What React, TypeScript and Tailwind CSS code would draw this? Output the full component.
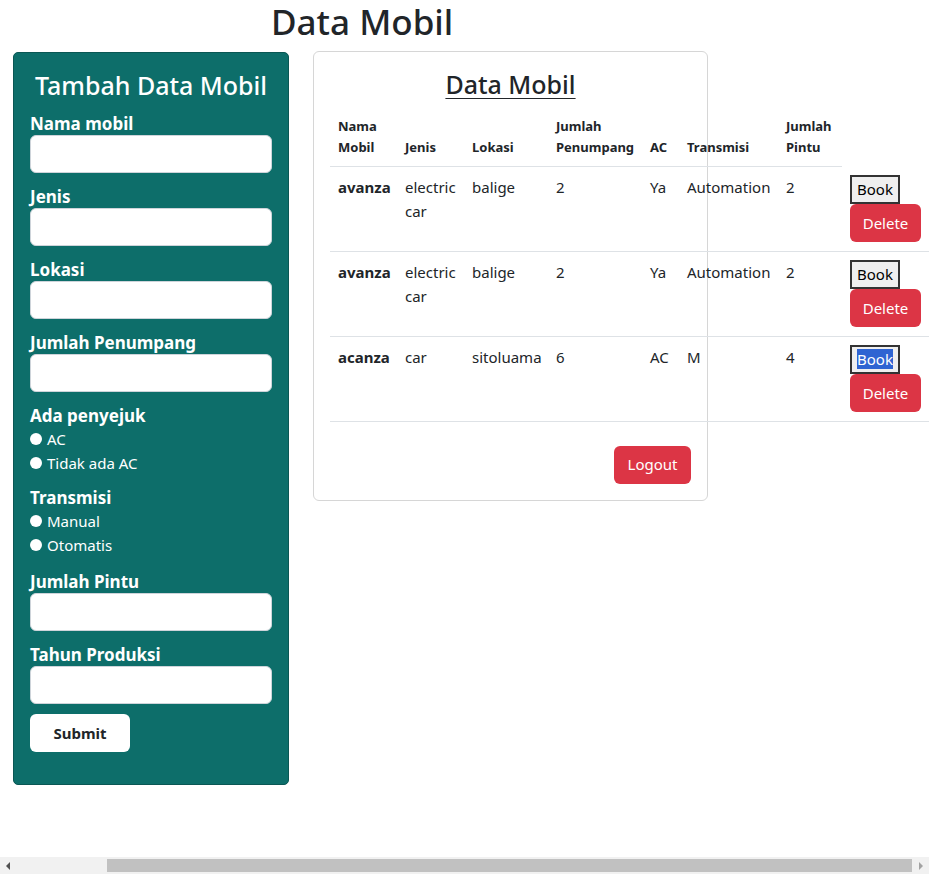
import React from 'react';

type Mobil = {
  nama: string;
  jenis: string;
  lokasi: string;
  penumpang: string;
  ac: string;
  transmisi: string;
  pintu: string;
};

const mobil: Mobil[] = [
  { nama: 'avanza', jenis: 'electric car', lokasi: 'balige', penumpang: '2', ac: 'Ya', transmisi: 'Automation', pintu: '2' },
  { nama: 'avanza', jenis: 'electric car', lokasi: 'balige', penumpang: '2', ac: 'Ya', transmisi: 'Automation', pintu: '2' },
  { nama: 'acanza', jenis: 'car', lokasi: 'sitoluama', penumpang: '6', ac: 'AC', transmisi: 'M', pintu: '4' },
];

function Field({ label }: { label: string }) {
  return (
    <div className="mb-[9px]">
      <label className="block h-[26px] text-[17px] font-bold leading-[30px] text-white">{label}</label>
      <input type="text" className="block h-[38px] w-full rounded-md border border-[#ced4da] bg-white px-3" />
    </div>
  );
}

function RadioGroup({ label, options, last }: { label: string; options: string[]; last?: boolean }) {
  return (
    <div className={last ? 'mb-[10px]' : 'mb-[8px]'}>
      <div className="h-[26px] text-[17px] font-bold leading-[30px] text-white">{label}</div>
      {options.map((o) => (
        <div key={o} className="flex h-[24px] items-center text-[15px] text-white">
          <span className="mr-[5px] inline-block h-[12px] w-[12px] rounded-full bg-white" />
          {o}
        </div>
      ))}
    </div>
  );
}

export default function App() {
  return (
    <div
      className="flex h-[874px] w-[929px] flex-col overflow-hidden bg-white text-[#212529]"
      style={{ fontFamily: '"Noto Sans", "Open Sans", sans-serif' }}
    >
      <div className="flex-1">
        <h1 className="mb-2 pl-[271px] text-[35px] font-medium leading-[43px]">Data Mobil</h1>

        <div className="flex items-start">
          {/* Form tambah */}
          <div className="ml-[13px] mt-px w-[276px] rounded-[5px] border border-[#0a5754] bg-[#0d6e6a] p-4 pb-[32px]">
            <h3 className="mb-2 text-center text-[25px] font-medium leading-[32px] text-white">Tambah Data Mobil</h3>
            <Field label="Nama mobil" />
            <Field label="Jenis" />
            <Field label="Lokasi" />
            <Field label="Jumlah Penumpang" />
            <RadioGroup label="Ada penyejuk" options={['AC', 'Tidak ada AC']} />
            <RadioGroup label="Transmisi" options={['Manual', 'Otomatis']} last />
            <Field label="Jumlah Pintu" />
            <Field label="Tahun Produksi" />
            <button className="mt-px h-[38px] w-[100px] rounded-md bg-white text-[15px] font-bold text-[#212529]">
              Submit
            </button>
          </div>

          {/* Data tabel */}
          <div className="ml-[24px] w-[395px] rounded-md border border-[#d6d6d6] p-4">
            <h3 className="mb-2 text-center text-[25px] font-medium leading-[32px] underline decoration-1 underline-offset-[4px]">
              Data Mobil
            </h3>
            <table className="w-[599px] table-fixed border-collapse text-left">
              <colgroup>
                <col className="w-[67px]" />
                <col className="w-[67px]" />
                <col className="w-[84px]" />
                <col className="w-[94px]" />
                <col className="w-[37px]" />
                <col className="w-[99px]" />
                <col className="w-[64px]" />
                <col className="w-[87px]" />
              </colgroup>
              <thead>
                <tr className="align-bottom text-[13px] font-bold leading-[21px]">
                  {['Nama Mobil', 'Jenis', 'Lokasi', 'Jumlah Penumpang', 'AC', 'Transmisi', 'Jumlah Pintu'].map((h) => (
                    <th key={h} className="border-b border-[#dee2e6] p-2 font-bold">
                      {h}
                    </th>
                  ))}
                </tr>
              </thead>
              <tbody className="text-[15px] leading-[24px]">
                {mobil.map((m, i) => (
                  <tr key={i} className="border-b border-[#dee2e6] align-top">
                    <td className="p-2 font-bold">{m.nama}</td>
                    <td className="p-2">{m.jenis}</td>
                    <td className="p-2">{m.lokasi}</td>
                    <td className="p-2">{m.penumpang}</td>
                    <td className="p-2">{m.ac}</td>
                    <td className="p-2">{m.transmisi}</td>
                    <td className="p-2">{m.pintu}</td>
                    <td className="px-2 pb-[9px] pt-2">
                      <div className="flex flex-col items-start">
                        <button className="h-[29px] border-2 border-[#333] bg-[#efefef] px-[5px] text-[15px] leading-[20px] text-black">
                          {i === 2 ? <span className="bg-[#2f64d2] text-white">Book</span> : 'Book'}
                        </button>
                        <button className="h-[38px] w-[71px] rounded-md bg-[#dc3545] text-[15px] text-white">Delete</button>
                      </div>
                    </td>
                  </tr>
                ))}
              </tbody>
            </table>
            <div className="mt-[24px] flex justify-end">
              <button className="h-[38px] w-[77px] rounded-md bg-[#dc3545] text-[15px] text-white">Logout</button>
            </div>
          </div>
        </div>
      </div>

      {/* horizontal scrollbar */}
      <div className="flex h-[17px] items-center bg-[#f1f1f1]">
        <div className="flex h-[17px] w-[17px] items-center justify-center">
          <svg width="5" height="8" viewBox="0 0 5 8">
            <path d="M4 0 L0 4 L4 8 Z" fill="#505050" />
          </svg>
        </div>
        <div className="w-[90px]" />
        <div className="h-[13px] flex-1 bg-[#c1c1c1]" />
        <div className="flex h-[17px] w-[17px] items-center justify-center">
          <svg width="5" height="8" viewBox="0 0 5 8">
            <path d="M1 0 L5 4 L1 8 Z" fill="#a3a3a3" />
          </svg>
        </div>
      </div>
    </div>
  );
}
